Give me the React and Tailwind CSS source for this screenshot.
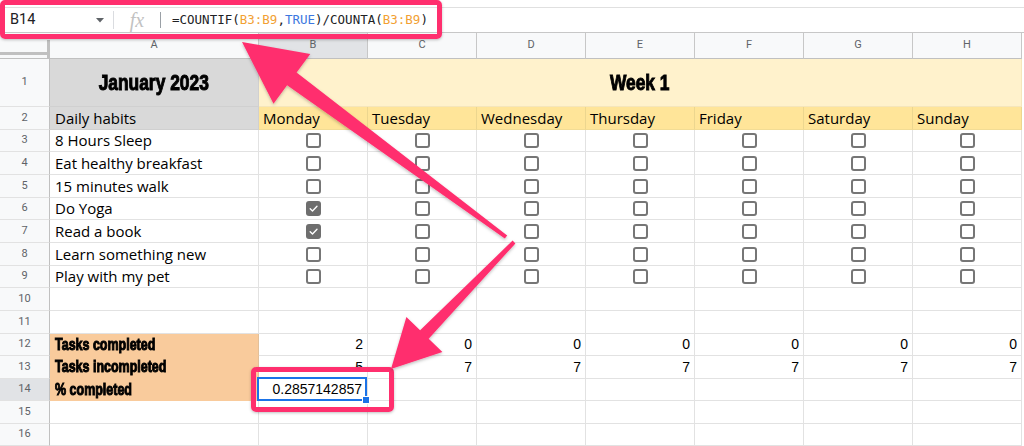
import React from 'react';

const COLS = ['B', 'C', 'D', 'E', 'F', 'G', 'H'];
const DAYS = ['Monday', 'Tuesday', 'Wednesday', 'Thursday', 'Friday', 'Saturday', 'Sunday'];
const HABITS = [
  '8 Hours Sleep',
  'Eat healthy breakfast',
  '15 minutes walk',
  'Do Yoga',
  'Read a book',
  'Learn something new',
  'Play with my pet',
];
const ROW_H = {
  3: 'h-[22px]', 4: 'h-[23px]', 5: 'h-[23px]', 6: 'h-[22px]', 7: 'h-[23px]',
  8: 'h-[23px]', 9: 'h-[22px]', 10: 'h-[23px]', 11: 'h-[23px]', 12: 'h-[22px]',
  13: 'h-[23px]', 14: 'h-[22px]', 15: 'h-[23px]', 16: 'h-[22px]',
};

const habitFont = "font-['Open_Sans',sans-serif] text-[15px] text-black";
const heavyFont = "font-['Liberation_Sans',Arial,sans-serif] font-bold text-black [-webkit-text-stroke:1px_#000]";
const numFont = "font-['Liberation_Sans',Arial,sans-serif] text-[14px] text-black";

function RowHeader({ n, active }) {
  return (
    <div
      className={`w-[50px] shrink-0 h-full flex items-center justify-center border-r border-b border-r-[#c0c0c0] border-b-[#e2e2e2] text-[11px] text-[#5f6368] font-['Roboto',sans-serif] ${
        active ? 'bg-[#e1e3e6]' : 'bg-[#f8f9fa]'
      }`}
    >
      {n}
    </div>
  );
}

function Checkbox({ checked }) {
  if (checked) {
    return (
      <div className="w-[15px] h-[15px] rounded-[3px] bg-[#6e6e6e] flex items-center justify-center">
        <svg width="11" height="11" viewBox="0 0 12 12">
          <path d="M2.4 6.3 L4.9 8.7 L9.8 3.5" stroke="white" strokeWidth="1.5" fill="none" strokeLinecap="round" strokeLinejoin="round" />
        </svg>
      </div>
    );
  }
  return <div className="w-[15px] h-[15px] rounded-[3px] border-2 border-[#767676] bg-white" />;
}

function arrowPoints(tail, tip, headLen, headHalf, shaftHead, shaftTail) {
  const dx = tip[0] - tail[0];
  const dy = tip[1] - tail[1];
  const len = Math.hypot(dx, dy);
  const ux = dx / len;
  const uy = dy / len;
  const nx = -uy;
  const ny = ux;
  const bx = tip[0] - ux * headLen;
  const by = tip[1] - uy * headLen;
  const pts = [
    [tail[0] + nx * shaftTail, tail[1] + ny * shaftTail],
    [bx + nx * shaftHead, by + ny * shaftHead],
    [bx + nx * headHalf, by + ny * headHalf],
    tip,
    [bx - nx * headHalf, by - ny * headHalf],
    [bx - nx * shaftHead, by - ny * shaftHead],
    [tail[0] - nx * shaftTail, tail[1] - ny * shaftTail],
  ];
  return pts.map((p) => `${p[0].toFixed(1)},${p[1].toFixed(1)}`).join(' ');
}

export default function App() {
  const bodyRows = [];
  for (let r = 3; r <= 16; r++) bodyRows.push(r);

  return (
    <div className="relative w-[1024px] h-[446px] overflow-hidden bg-white font-['Roboto',sans-serif]">
      {/* Formula bar */}
      <div className="h-[33px] pt-[7px] bg-white">
        <div className="h-[26px] border-t border-b border-t-[#e0e0e0] border-b-[#c7c7c7] flex items-center">
          <div className="w-[113px] h-full flex items-center justify-between pl-[10px] pr-[9px] text-[14.5px] text-[#202124] font-['Roboto',sans-serif]">
            <span>B14</span>
            <svg width="8" height="5" viewBox="0 0 8 5">
              <path d="M0 0 L8 0 L4 4.5 Z" fill="#5f6368" />
            </svg>
          </div>
          <div className="w-px h-[18px] bg-[#dadce0]" />
          <div className="w-[46px] text-center italic font-['Liberation_Serif',serif] text-[20px] leading-none text-[#c2c2c2]">
            fx
          </div>
          <div className="w-px h-[16px] bg-[#9aa0a6]" />
          <div className="pl-[11px] font-['DejaVu_Sans_Mono',monospace] text-[12.5px] text-[#202124] whitespace-nowrap">
            =COUNTIF(<span className="text-[#f2a033]">B3:B9</span>,<span className="text-[#3d77e0]">TRUE</span>)/COUNTA(
            <span className="text-[#f2a033]">B3:B9</span>)
          </div>
        </div>
      </div>

      {/* Column headers */}
      <div className="flex h-[26px]">
        <div className="relative w-[50px] shrink-0 h-full bg-[#f8f9fa] border-b border-b-[#c0c0c0]">
          <div className="absolute left-0 top-[19px] w-[48px] h-[3px] bg-[#c0c0c0]" />
          <div className="absolute left-[47px] top-[7px] w-[3px] h-[18px] bg-[#c0c0c0]" />
        </div>
        <div className="w-[209px] shrink-0 h-full flex items-center justify-center bg-[#f8f9fa] border-r border-b border-r-[#c7c7c7] border-b-[#c0c0c0] text-[11px] text-[#5f6368]">
          A
        </div>
        {COLS.map((c) => (
          <div
            key={c}
            className={`w-[109px] shrink-0 h-full flex items-center justify-center border-r border-b border-r-[#c7c7c7] border-b-[#c0c0c0] text-[11px] text-[#5f6368] ${
              c === 'B' ? 'bg-[#e1e3e6]' : 'bg-[#f8f9fa]'
            }`}
          >
            {c}
          </div>
        ))}
      </div>

      {/* Row 1 */}
      <div className="flex h-[48px]">
        <RowHeader n={1} />
        <div className="w-[209px] shrink-0 h-full flex items-center justify-center bg-[#d9d9d9] border-r border-b border-[#d0d0d0]">
          <span className={`inline-block scale-x-[0.79] text-[22px] ${heavyFont}`}>January 2023</span>
        </div>
        <div className="w-[763px] shrink-0 h-full flex items-center justify-center bg-[#fff2cc] border-r border-b border-[#f5e6bb]">
          <span className={`inline-block scale-x-[0.79] text-[22px] ${heavyFont}`}>Week 1</span>
        </div>
      </div>

      {/* Row 2 */}
      <div className="flex h-[23px]">
        <RowHeader n={2} />
        <div className={`w-[209px] shrink-0 h-full flex items-center pl-[5px] bg-[#d9d9d9] border-r border-b border-[#d0d0d0] ${habitFont}`}>
          Daily habits
        </div>
        {DAYS.map((d) => (
          <div
            key={d}
            className={`w-[109px] shrink-0 h-full flex items-center pl-[4px] bg-[#ffe599] border-r border-b border-r-[#ecd68f] border-b-[#f2dc95] ${habitFont}`}
          >
            {d}
          </div>
        ))}
      </div>

      {/* Body rows */}
      {bodyRows.map((r) => {
        const habit = r >= 3 && r <= 9 ? HABITS[r - 3] : null;
        const summary = r === 12 ? 'Tasks completed' : r === 13 ? 'Tasks incompleted' : r === 14 ? '% completed' : null;
        return (
          <div key={r} className={`flex ${ROW_H[r]}`}>
            <RowHeader n={r} active={r === 14} />
            {summary ? (
              <div className="w-[209px] shrink-0 h-full flex items-center pl-[5px] bg-[#f9cb9c] border-r border-b border-r-[#e2c09a] border-b-[#f9cb9c]">
                <span className={`inline-block origin-left scale-x-[0.78] text-[16px] ${heavyFont}`}>{summary}</span>
              </div>
            ) : (
              <div className={`w-[209px] shrink-0 h-full flex items-center pl-[5px] border-r border-b border-[#e2e2e2] ${habitFont}`}>
                {habit}
              </div>
            )}
            {COLS.map((c) => {
              let content = null;
              let cls = 'justify-center';
              if (habit) {
                content = <Checkbox checked={c === 'B' && (r === 6 || r === 7)} />;
              } else if (r === 12) {
                content = <span className={numFont}>{c === 'B' ? '2' : '0'}</span>;
                cls = 'justify-end pr-[4px]';
              } else if (r === 13) {
                content = <span className={numFont}>{c === 'B' ? '5' : '7'}</span>;
                cls = 'justify-end pr-[4px]';
              } else if (r === 14 && c === 'B') {
                content = (
                  <div className="relative w-[110px] h-[24px] -ml-[2px] -mt-[1px] border-2 border-[#1a73e8] flex items-center justify-end pr-[3px] bg-white">
                    <span className={numFont}>0.2857142857</span>
                    <div className="absolute -right-[5px] -bottom-[5px] w-[8px] h-[8px] bg-[#1a73e8] border border-white" />
                  </div>
                );
                cls = 'justify-start';
              }
              return (
                <div key={c} className={`w-[109px] shrink-0 h-full flex items-center border-r border-b border-[#e2e2e2] ${cls}`}>
                  {content}
                </div>
              );
            })}
          </div>
        );
      })}

      {/* Annotation overlays */}
      <div className="absolute left-0 top-0 w-[442px] h-[39px] rounded-[5px] border-[5px] border-[#ff2f6e] shadow-[0_1px_3px_rgba(0,0,0,0.25)]" />
      <div className="absolute left-[251px] top-[367px] w-[143px] h-[45px] rounded-[5px] border-[5px] border-[#ff2f6e] shadow-[0_1px_3px_rgba(0,0,0,0.25)]" />
      <svg className="absolute left-0 top-0 pointer-events-none" width="1024" height="446" viewBox="0 0 1024 446">
        <defs>
          <filter id="sh" x="-10%" y="-10%" width="120%" height="120%">
            <feDropShadow dx="0" dy="1.5" stdDeviation="1.5" floodColor="#000" floodOpacity="0.25" />
          </filter>
        </defs>
        <polygon
          points={arrowPoints([506, 237], [242, 42], 62, 31, 8, 2)}
          fill="#ff2f6e"
          filter="url(#sh)"
        />
        <polygon
          points={arrowPoints([514, 242], [391, 369], 48, 25, 6, 2)}
          fill="#ff2f6e"
          filter="url(#sh)"
        />
      </svg>
    </div>
  );
}
